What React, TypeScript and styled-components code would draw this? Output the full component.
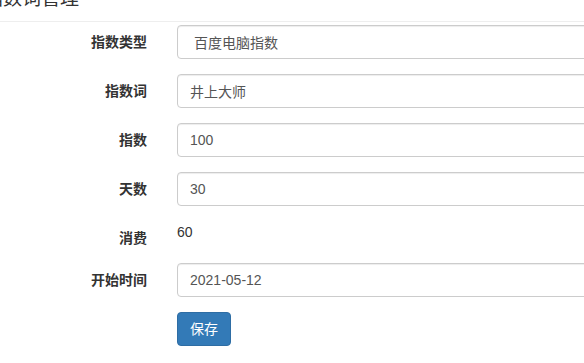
import styled, { createGlobalStyle } from "styled-components";

const GlobalStyle = createGlobalStyle`
  html, body {
    margin: 0;
    padding: 0;
    background: #fff;
    overflow: hidden;
  }
  body {
    font-family: "Liberation Sans", "Noto Sans CJK SC", Arial, sans-serif;
    font-size: 14px;
    line-height: 1.42857;
    color: #333;
  }
  * {
    box-sizing: border-box;
  }
`;

const Page = styled.div`
  width: 584px;
  height: 363px;
  overflow: hidden;
`;

const Header = styled.div`
  margin: -12px 0 3px -16px;
  padding-bottom: 11px;
  border-bottom: 1px solid #eee;
`;

const Title = styled.h3`
  margin: 0;
  font-size: 19px;
  line-height: 22px;
  font-weight: 400;
  color: #333;
  font-family: "Liberation Sans", "Noto Sans CJK SC", sans-serif;
`;

const Form = styled.form`
  display: flex;
  flex-direction: column;
  gap: 15px;
`;

const Row = styled.div`
  display: grid;
  grid-template-columns: 162px 1fr;
  align-items: start;
`;

const Label = styled.label`
  padding: 7px 15px 0 0;
  text-align: right;
  font-weight: 700;
  line-height: 20px;
  color: #333;
`;

const Field = styled.div`
  padding-left: 15px;
  margin-right: -40px;
`;

const Input = styled.input<{ $extra?: number }>`
  display: block;
  width: 100%;
  height: 34px;
  padding: 6px 12px 6px ${(p) => 12 + (p.$extra ?? 0)}px;
  font-family: "Liberation Sans", "Noto Sans CJK SC", sans-serif;
  font-size: 14px;
  line-height: 20px;
  color: #555;
  background: #fff;
  border: 1px solid #ccc;
  border-radius: 4px;
  box-shadow: inset 0 1px 1px rgba(0, 0, 0, 0.075);
  outline: none;
`;

const Static = styled.div`
  padding-top: 1px;
  line-height: 20px;
  color: #333;
`;

const Button = styled.button`
  display: inline-block;
  height: 34px;
  padding: 6px 12px;
  font-family: "Liberation Sans", "Noto Sans CJK SC", sans-serif;
  font-size: 14px;
  line-height: 20px;
  color: #fff;
  background: #337ab7;
  border: 1px solid #2e6da4;
  border-radius: 4px;
  cursor: pointer;
`;

const rows = [
  { label: "指数类型", value: "百度电脑指数", extra: 4 },
  { label: "指数词", value: "井上大师" },
  { label: "指数", value: "100" },
  { label: "天数", value: "30" },
];

export default function App() {
  return (
    <Page>
      <GlobalStyle />
      <Header>
        <Title>指数词管理</Title>
      </Header>
      <Form onSubmit={(e) => e.preventDefault()}>
        {rows.map((r) => (
          <Row key={r.label}>
            <Label>{r.label}</Label>
            <Field>
              <Input $extra={r.extra} defaultValue={r.value} />
            </Field>
          </Row>
        ))}
        <Row>
          <Label>消费</Label>
          <Field>
            <Static>60</Static>
          </Field>
        </Row>
        <Row>
          <Label>开始时间</Label>
          <Field>
            <Input defaultValue="2021-05-12" />
          </Field>
        </Row>
        <Row>
          <span />
          <Field>
            <Button type="submit">保存</Button>
          </Field>
        </Row>
      </Form>
    </Page>
  );
}
